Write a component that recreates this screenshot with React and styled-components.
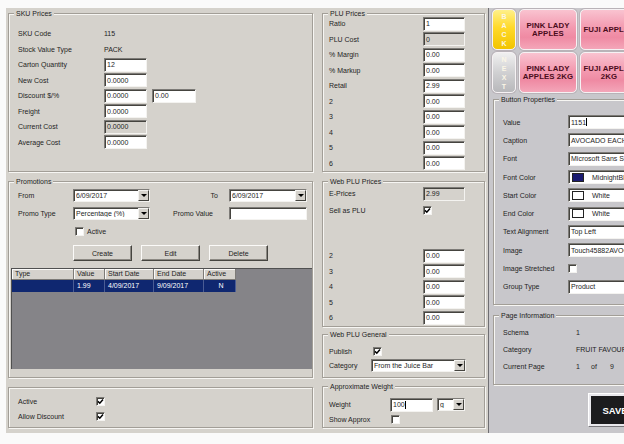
import styled, { createGlobalStyle } from "styled-components";

const GlobalStyle = createGlobalStyle`
  body {
    margin: 0;
    background: #fafafa;
    font-family: "Liberation Sans", Arial, sans-serif;
    font-size: 7px;
    color: #1e1e1e;
  }
`
const Page = styled.div`
  width: 624px;
  height: 444px;
  box-sizing: border-box;
  padding: 8px 0 0 6px;
  overflow: hidden;
`
const Window = styled.div`
  display: flex;
  height: 425px;
  background: #d5d2cc;
`
const Column = styled.div`
  display: flex;
  flex-direction: column;
  flex-shrink: 0;
  box-sizing: border-box;
  width: ${p => p.$w}px;
  padding: ${p => p.$pad};
`
const Group = styled.div`
  position: relative;
  flex-shrink: 0;
  box-sizing: border-box;
  height: ${p => p.$h}px;
  width: ${p => (p.$w ? p.$w + "px" : "auto")};
  margin-top: ${p => p.$mt || 0}px;
  margin-left: ${p => p.$ml || 0}px;
  padding: ${p => p.$pt || 0}px 0 0 ${p => p.$pl || 0}px;
  background: ${p => p.$bg || "#d5d2cc"};
  border: 1px solid #a29e97;
  box-shadow: inset 1px 1px 0 #f7f6f3, 1px 1px 0 #f7f6f3;
`
const Legend = styled.span`
  position: absolute;
  top: -5px;
  left: 5px;
  padding: 0 2px;
  line-height: 10px;
  background: inherit;
  white-space: nowrap;
`
const Row = styled.div`
  display: flex;
  align-items: center;
  flex-shrink: 0;
  height: ${p => p.$h || 15.5}px;
  margin-top: ${p => p.$mt || 0}px;
  padding-left: ${p => p.$pl || 0}px;
  white-space: nowrap;
`
const Label = styled.span`
  flex-shrink: 0;
  width: ${p => p.$w}px;
  white-space: nowrap;
  text-align: ${p => (p.$right ? "right" : "left")};
  padding-right: ${p => p.$pr || 0}px;
  box-sizing: border-box;
`
const Box = styled.div`
  display: flex;
  align-items: center;
  flex-shrink: 0;
  box-sizing: border-box;
  width: ${p => p.$w}px;
  height: ${p => p.$h || 14}px;
  margin-left: ${p => p.$ml || 0}px;
  padding-left: 2px;
  background: ${p => (p.$off ? "#d5d2cc" : "#fff")};
  border: 1px solid;
  border-color: #7d7b77 #f4f3f0 #f4f3f0 #7d7b77;
  box-shadow: inset 1px 1px 0 #45443f;
  white-space: nowrap;
  overflow: hidden;
`
const BoxText = styled.span`
  flex: 1;
  overflow: hidden;
`
const Caret = styled.span`
  display: inline-block;
  width: 1px;
  height: 8px;
  background: #000;
  vertical-align: middle;
`
const DropBtn = styled.span`
  display: flex;
  align-items: center;
  justify-content: center;
  flex-shrink: 0;
  box-sizing: border-box;
  width: 11px;
  height: 100%;
  background: #d5d2cc;
  border: 1px solid;
  border-color: #f4f3f0 #45443f #45443f #f4f3f0;
  &::after {
    content: "";
    border-left: 3px solid transparent;
    border-right: 3px solid transparent;
    border-top: 3px solid #000;
  }
`
const Swatch = styled.span`
  flex-shrink: 0;
  width: 10px;
  height: 7px;
  margin: 0 8px 0 1px;
  border: 1px solid #222;
  background: ${p => p.$c};
`
const Check = styled.span`
  display: flex;
  align-items: center;
  justify-content: center;
  flex-shrink: 0;
  box-sizing: border-box;
  width: 9px;
  height: 9px;
  margin-left: ${p => p.$ml || 0}px;
  margin-right: ${p => p.$mr || 0}px;
  background: #fff;
  border: 1px solid;
  border-color: #7d7b77 #f4f3f0 #f4f3f0 #7d7b77;
  box-shadow: inset 1px 1px 0 #45443f;
`
const Button = styled.div`
  display: flex;
  align-items: center;
  justify-content: center;
  box-sizing: border-box;
  width: 59px;
  height: 16px;
  background: #d5d2cc;
  border: 1px solid;
  border-color: #fbfaf8 #45443f #45443f #fbfaf8;
  box-shadow: inset -1px -1px 0 #8c8983;
`
const ButtonRow = styled.div`
  display: flex;
  gap: 9px;
  margin-top: 7px;
  padding-left: 64px;
`
const List = styled.div`
  flex-shrink: 0;
  margin: 7px 0 0 2px;
  height: 101px;
  background: #858488;
  border-top: 1px solid #505050;
  border-left: 1px solid #505050;
  box-sizing: border-box;
`
const ListRow = styled.div`
  display: grid;
  grid-template-columns: 62px 31px 49px 50px 32px;
  height: ${p => (p.$head ? 11 : 12)}px;
  width: 224px;
`
const HeadCell = styled.div`
  padding-left: 3px;
  line-height: 10px;
  background: #d5d2cc;
  border-right: 1px solid #7d7b77;
  border-bottom: 1px solid #7d7b77;
  box-shadow: inset 1px 1px 0 #fbfaf8;
  white-space: nowrap;
  overflow: hidden;
`
const Cell = styled.div`
  padding-left: 3px;
  line-height: 12px;
  background: #0f2770;
  color: #fff;
  border-right: 1px solid #4a5c94;
  text-align: ${p => (p.$center ? "center" : "left")};
  white-space: nowrap;
`
const RightPane = styled.div`
  flex: 1;
  display: flex;
  flex-direction: column;
  box-sizing: border-box;
  padding: 1px 0 0 3px;
  background: #c8c7cb;
  border-left: 1px solid #6f6e72;
  overflow: hidden;
`
const Tiles = styled.div`
  display: grid;
  grid-template-columns: 24px 58px 58px;
  grid-template-rows: 41px 41px;
  gap: 2px 3px;
  flex-shrink: 0;
`
const Tile = styled.div`
  display: flex;
  flex-direction: column;
  align-items: center;
  justify-content: center;
  box-sizing: border-box;
  border-radius: 5px;
  border: 1px solid #f6f2f4;
  box-shadow: 0 0 0 1px #b9b3b8;
  font-weight: 700;
  text-align: center;
  line-height: 8px;
  background: ${p =>
    p.$kind === "back"
      ? "linear-gradient(#fff08a, #ffd92a 45%, #f2c400)"
      : p.$kind === "next"
      ? "linear-gradient(#f0f0f0, #d0d0d2 50%, #b8b8bb)"
      : "linear-gradient(#f9c3d0, #f39ab0 45%, #ef8aa3 70%, #f4a6b9)"};
  color: ${p => (p.$kind === "pink" ? "#4a0c1c" : "#fbf6e6")};
  font-size: ${p => (p.$kind === "pink" ? 7.8 : 7)}px;
  letter-spacing: ${p => (p.$kind === "pink" ? 0.1 : 0)}px;
  white-space: nowrap;
`
const Letters = styled.span`
  line-height: 9px;
  white-space: pre-line;
`
const Info = styled.span`
  display: inline-block;
  width: ${p => p.$w}px;
  flex-shrink: 0;
  white-space: nowrap;
`
const SaveButton = styled.div`
  flex-shrink: 0;
  box-sizing: border-box;
  width: 54px;
  height: 34px;
  margin: 8px 0 0 96px;
  padding: 2px;
  background: #e9e8ec;
  border: 1px solid;
  border-color: #ffffff #77767a #77767a #ffffff;
`
const SaveInner = styled.div`
  display: flex;
  align-items: center;
  justify-content: center;
  height: 100%;
  background: #1c1c1e;
  color: #fff;
  font-weight: 700;
  font-size: 9.5px;
`

function Tick() {
  return (
    <svg width="7" height="7" viewBox="0 0 7 7">
      <polyline points="1,3.4 2.8,5.2 6,1.6" fill="none" stroke="#000" strokeWidth="1.5" />
    </svg>
  );
}

function Combo({ w, h = 13, ml, children }) {
  return (
    <Box $w={w} $h={h} $ml={ml}>
      <BoxText>{children}</BoxText>
      <DropBtn />
    </Box>
  );
}

const skuRows = [
  ["SKU Code", "115"],
  ["Stock Value Type", "PACK"],
  ["Carton Quantity", "12", "box"],
  ["New Cost", "0.0000", "box"],
  ["Discount $/%", "0.0000", "box", "0.00"],
  ["Freight", "0.0000", "box"],
  ["Current Cost", "0.0000", "off"],
  ["Average Cost", "0.0000", "box"],
];

const pluRows = [
  ["Ratio", "1"],
  ["PLU Cost", "0", true],
  ["% Margin", "0.00"],
  ["% Markup", "0.00"],
  ["Retail", "2.99"],
  ["2", "0.00"],
  ["3", "0.00"],
  ["4", "0.00"],
  ["5", "0.00"],
  ["6", "0.00"],
];

const promos = [{ type: "", value: "1.99", start: "4/09/2017", end: "9/09/2017", active: "N" }];

export default function App() {
  return (
    <Page>
      <GlobalStyle />
      <Window>
        <Column $w={310} $pad="5px 3px 0 2px">
          <Group $h={159} $pt={12} $pl={9}>
            <Legend>SKU Prices</Legend>
            {skuRows.map(([label, value, kind, extra]) => (
              <Row key={label}>
                <Label $w={86}>{label}</Label>
                {kind ? (
                  <Box $w={43} $off={kind === "off"}>{value}</Box>
                ) : (
                  <span>{value}</span>
                )}
                {extra && <Box $w={44} $ml={5}>{extra}</Box>}
              </Row>
            ))}
          </Group>

          <Group $h={197} $mt={9} $pt={5} style={{ display: "flex", flexDirection: "column" }}>
            <Legend>Promotions</Legend>
            <Row $h={17} $pl={9}>
              <Label $w={55}>From</Label>
              <Combo w={77}>6/09/2017</Combo>
              <Label $w={79} $right $pr={11}>To</Label>
              <Combo w={78}>6/09/2017</Combo>
            </Row>
            <Row $h={17} $mt={1} $pl={9}>
              <Label $w={55}>Promo Type</Label>
              <Combo w={77}>Percentage (%)</Combo>
              <Label $w={56} style={{ marginLeft: 23 }}>Promo Value</Label>
              <Box $w={78} $h={13} />
            </Row>
            <Row $h={14} $mt={2} $pl={66}>
              <Check $mr={3} />
              <span>Active</span>
            </Row>
            <ButtonRow>
              <Button>Create</Button>
              <Button>Edit</Button>
              <Button>Delete</Button>
            </ButtonRow>
            <List>
              <ListRow $head>
                <HeadCell>Type</HeadCell>
                <HeadCell>Value</HeadCell>
                <HeadCell>Start Date</HeadCell>
                <HeadCell>End Date</HeadCell>
                <HeadCell>Active</HeadCell>
              </ListRow>
              {promos.map(p => (
                <ListRow key={p.start}>
                  <Cell>{p.type}</Cell>
                  <Cell>{p.value}</Cell>
                  <Cell>{p.start}</Cell>
                  <Cell>{p.end}</Cell>
                  <Cell $center>{p.active}</Cell>
                </ListRow>
              ))}
            </List>
          </Group>

          <Group $h={41} $mt={9} $pt={6} $pl={9}>
            <Row $h={15}>
              <Label $w={78}>Active</Label>
              <Check><Tick /></Check>
            </Row>
            <Row $h={15}>
              <Label $w={78}>Allow Discount</Label>
              <Check><Tick /></Check>
            </Row>
          </Group>
        </Column>

        <Column $w={172} $pad="5px 3px 0 6px">
          <Group $h={159} $pt={2} $pl={6}>
            <Legend>PLU Prices</Legend>
            {pluRows.map(([label, value, off]) => (
              <Row key={label}>
                <Label $w={94}>{label}</Label>
                <Box $w={42} $off={off}>{value}</Box>
              </Row>
            ))}
          </Group>

          <Group $h={146} $mt={9} $pt={4} $pl={6}>
            <Legend>Web PLU Prices</Legend>
            <Row>
              <Label $w={94}>E-Prices</Label>
              <Box $w={42} $off>2.99</Box>
            </Row>
            <Row $mt={1.5}>
              <Label $w={94}>Sell as PLU</Label>
              <Check><Tick /></Check>
            </Row>
            {["2", "3", "4", "5", "6"].map((n, i) => (
              <Row key={n} $mt={i === 0 ? 29.5 : 0}>
                <Label $w={94}>{n}</Label>
                <Box $w={42}>0.00</Box>
              </Row>
            ))}
          </Group>

          <Group $h={44} $mt={7} $pt={9} $pl={6}>
            <Legend>Web PLU General</Legend>
            <Row $h={14}>
              <Label $w={44}>Publish</Label>
              <Check><Tick /></Check>
            </Row>
            <Row $h={14}>
              <Label $w={42}>Category</Label>
              <Combo w={95}>From the Juice Bar</Combo>
            </Row>
          </Group>

          <Group $h={42} $mt={8} $pt={10} $pl={6}>
            <Legend>Approximate Weight</Legend>
            <Row $h={15}>
              <Label $w={61}>Weight</Label>
              <Box $w={43}>100<Caret /></Box>
              <Combo w={28} ml={4}>g</Combo>
            </Row>
            <Row $h={15}>
              <Label $w={62}>Show Approx</Label>
              <Check />
            </Row>
          </Group>
        </Column>

        <RightPane>
          <Tiles>
            <Tile $kind="back"><Letters>{"B\nA\nC\nK"}</Letters></Tile>
            <Tile $kind="pink">PINK LADY<br />APPLES</Tile>
            <Tile $kind="pink">FUJI APPLES</Tile>
            <Tile $kind="next"><Letters>{"N\nE\nX\nT"}</Letters></Tile>
            <Tile $kind="pink">PINK LADY<br />APPLES 2KG</Tile>
            <Tile $kind="pink">FUJI APPLES<br />2KG</Tile>
          </Tiles>

          <Group $h={206} $w={150} $mt={6} $ml={1} $pt={13} $pl={9} $bg="#c8c7cb">
            <Legend>Button Properties</Legend>
            <Row $h={18.3}>
              <Label $w={65}>Value</Label>
              <Box $w={80}>1151<Caret /></Box>
            </Row>
            <Row $h={18.3}>
              <Label $w={65}>Caption</Label>
              <Box $w={80}>AVOCADO EACH</Box>
            </Row>
            <Row $h={18.3}>
              <Label $w={65}>Font</Label>
              <Box $w={80}>Microsoft Sans Serif</Box>
            </Row>
            <Row $h={18.3}>
              <Label $w={65}>Font Color</Label>
              <Box $w={80}><Swatch $c="#1a1a70" />MidnightBlue</Box>
            </Row>
            <Row $h={18.3}>
              <Label $w={65}>Start Color</Label>
              <Box $w={80}><Swatch $c="#fff" />White</Box>
            </Row>
            <Row $h={18.3}>
              <Label $w={65}>End Color</Label>
              <Box $w={80}><Swatch $c="#fff" />White</Box>
            </Row>
            <Row $h={18.3}>
              <Label $w={65}>Text Alignment</Label>
              <Box $w={80}>Top Left</Box>
            </Row>
            <Row $h={18.3}>
              <Label $w={65}>Image</Label>
              <Box $w={80}>Touch45882AVOCADO.png</Box>
            </Row>
            <Row $h={18.3}>
              <Label $w={65}>Image Stretched</Label>
              <Check />
            </Row>
            <Row $h={18.3}>
              <Label $w={65}>Group Type</Label>
              <Box $w={80}>Product</Box>
            </Row>
          </Group>

          <Group $h={70} $w={150} $mt={10} $ml={1} $pt={8} $pl={9} $bg="#c8c7cb">
            <Legend>Page Information</Legend>
            <Row $h={17}>
              <Label $w={73}>Schema</Label>
              <span>1</span>
            </Row>
            <Row $h={17}>
              <Label $w={73}>Category</Label>
              <span>FRUIT FAVOURITES</span>
            </Row>
            <Row $h={17}>
              <Label $w={73}>Current Page</Label>
              <Info $w={15}>1</Info>
              <Info $w={19}>of</Info>
              <Info $w={10}>9</Info>
            </Row>
          </Group>

          <SaveButton>
            <SaveInner>SAVE</SaveInner>
          </SaveButton>
        </RightPane>
      </Window>
    </Page>
  );
}
